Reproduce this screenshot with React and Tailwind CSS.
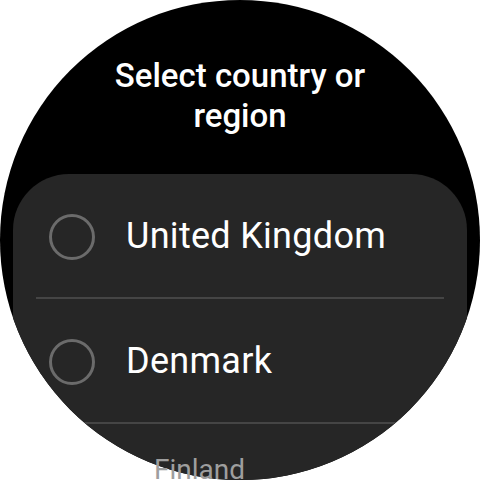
import React from 'react';

const countries = ['United Kingdom', 'Denmark'];

const Radio = () => (
  <div className="w-[46px] h-[46px] rounded-full border-[3px] border-[#6b6b6b] shrink-0" />
);

export default function App() {
  return (
    <div
      className="relative w-[480px] h-[480px] bg-white overflow-hidden"
      style={{ fontFamily: 'Roboto, "Noto Sans", sans-serif' }}
    >
      {/* watch face */}
      <div className="w-[480px] h-[480px] rounded-full bg-black overflow-hidden flex flex-col">
        <h1 className="pt-[56px] text-center text-white text-[33px] leading-[40px] font-medium">
          Select country or
          <br />
          region
        </h1>

        <div className="mt-[38px] mx-[13px] flex-1 bg-[#262626] rounded-t-[56px]">
          {countries.map((name) => (
            <div key={name} className="mx-[23px] h-[125px] flex items-center border-b-[2px] border-[#454545]">
              <div className="pl-[13px] pt-[2px]">
                <Radio />
              </div>
              <span className="ml-[31px] text-white text-[36px] leading-none tracking-[0.3px]">{name}</span>
            </div>
          ))}
        </div>
      </div>

      {/* next item, partly under the bezel */}
      <span className="absolute left-[154px] top-[456px] text-[28px] leading-none text-[#9e9e9e]">
        Finland
      </span>
    </div>
  );
}
